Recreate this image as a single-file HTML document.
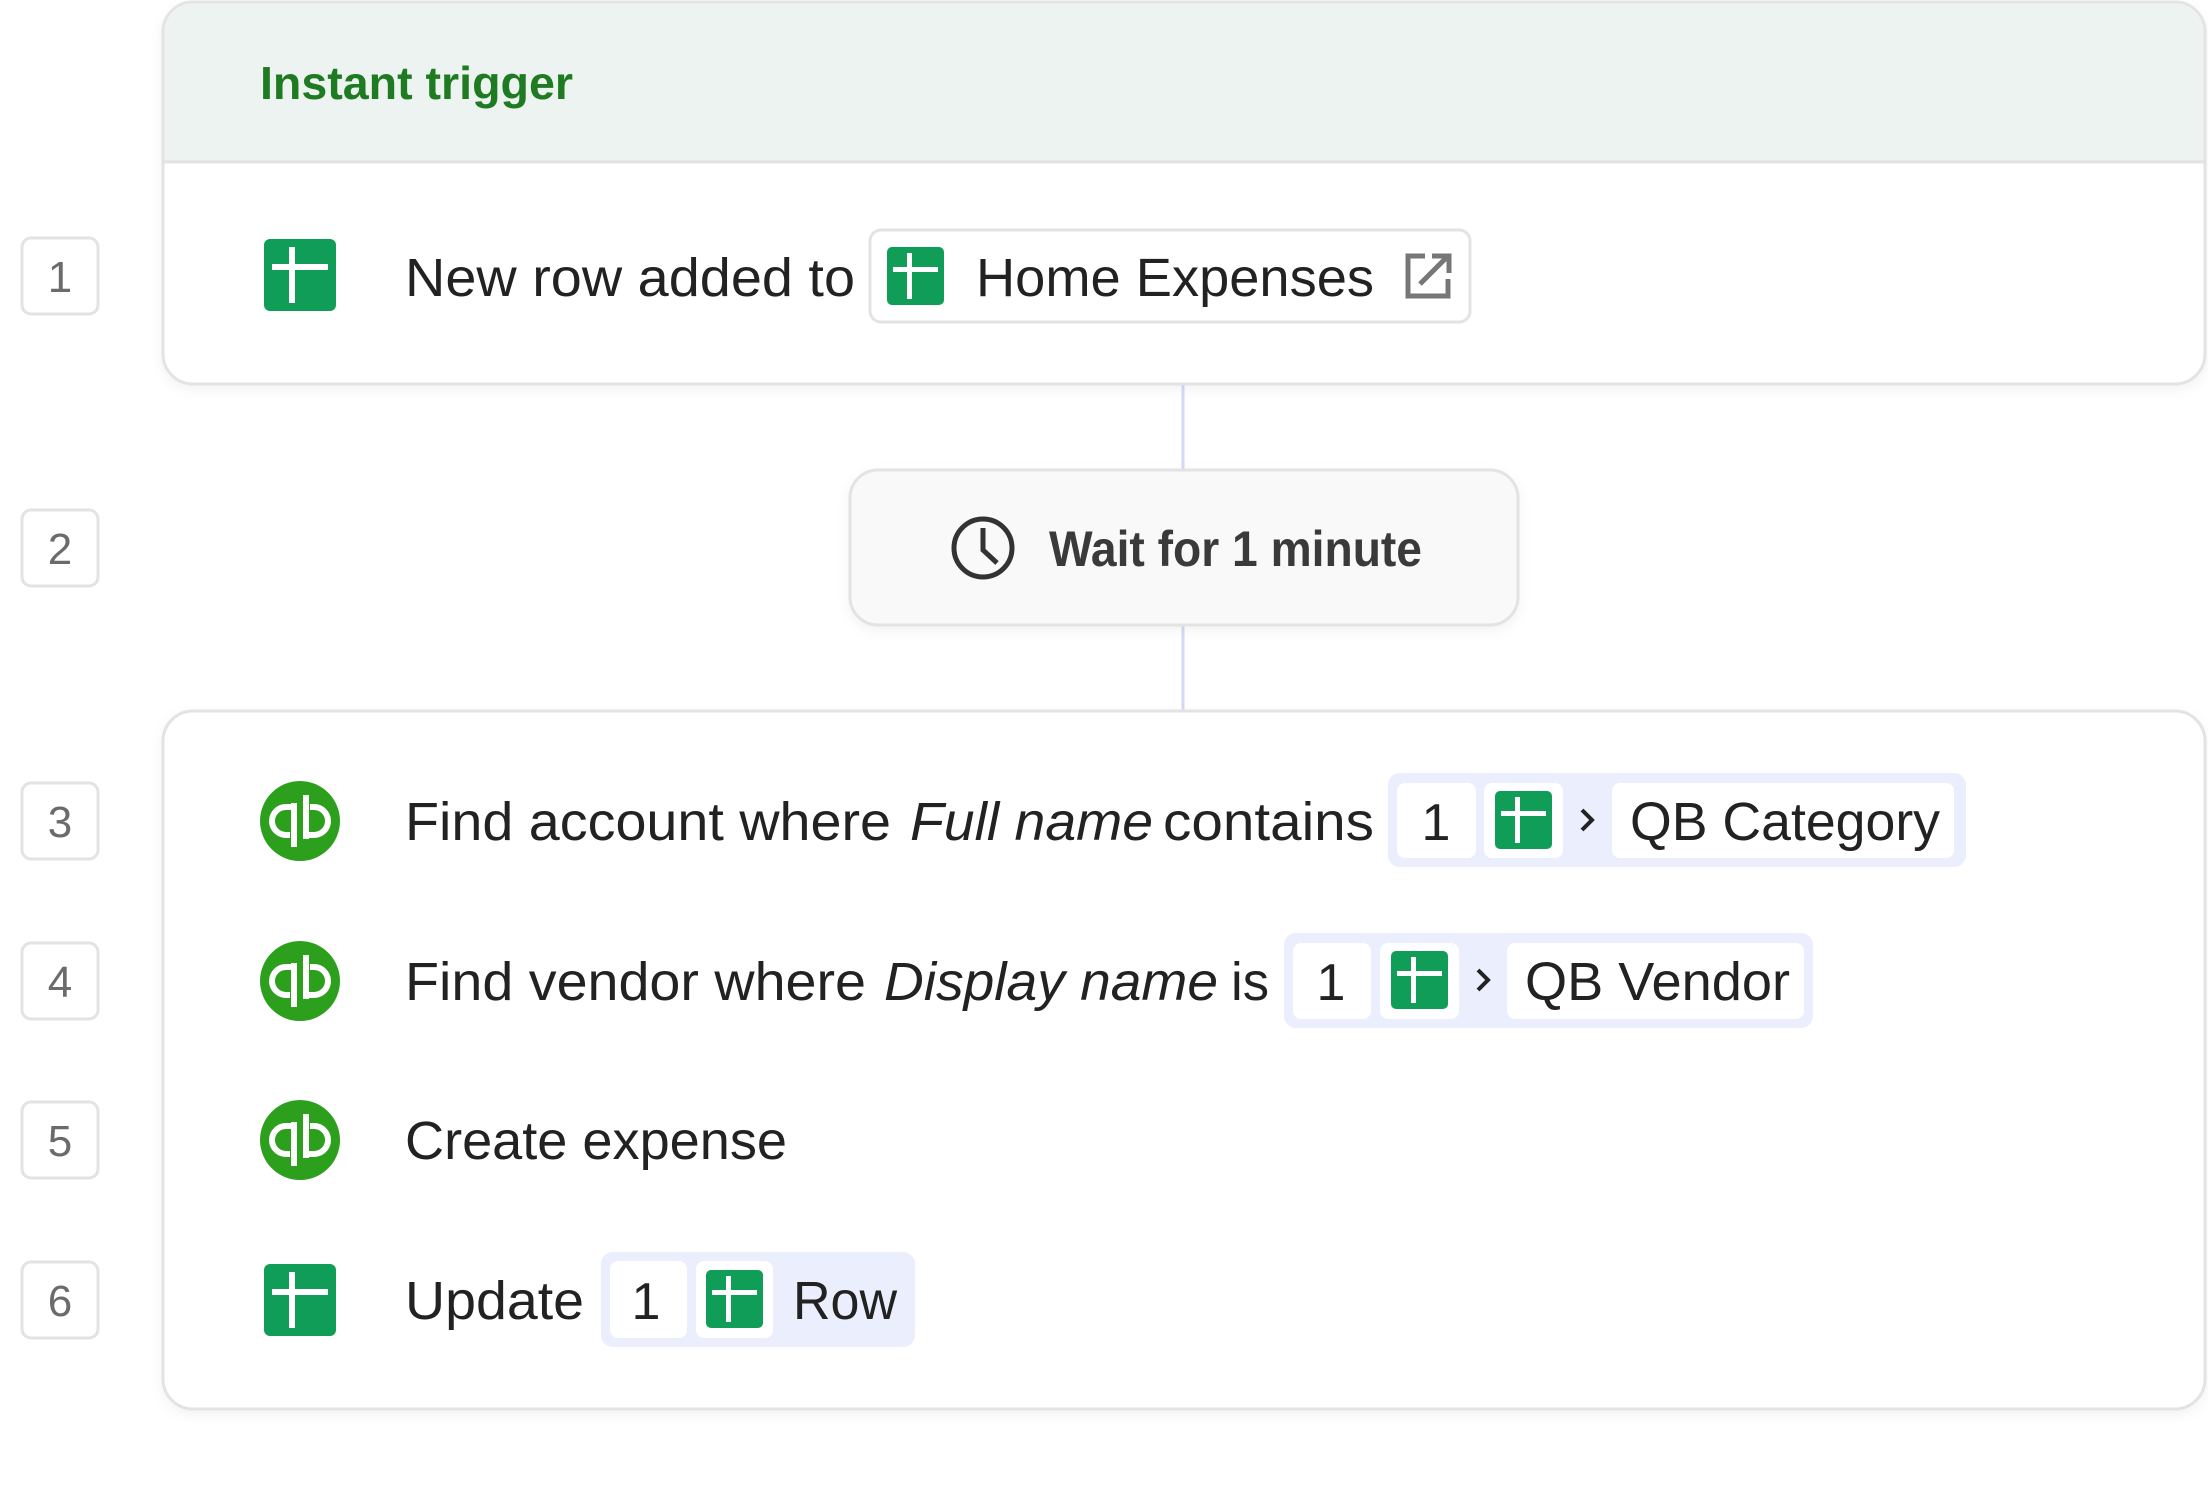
<!DOCTYPE html>
<html><head><meta charset="utf-8"><style>
html,body{margin:0;padding:0;background:#fff;}
svg{display:block;}
text{font-family:"Liberation Sans",sans-serif;}
</style></head><body>
<svg width="2208" height="1508" viewBox="0 0 2208 1508" xmlns="http://www.w3.org/2000/svg">
<defs>
<filter id="sh" x="-5%" y="-5%" width="110%" height="115%"><feDropShadow dx="0" dy="4" stdDeviation="6" flood-color="#000" flood-opacity="0.05"/></filter>
<g id="sheet">
<rect x="0" y="0" width="72" height="72" rx="6" fill="#0f9d58"/>
<rect x="8" y="25" width="56" height="6" fill="#fff"/>
<rect x="25" y="8" width="6" height="56" fill="#fff"/>
</g>
<g id="sheetS">
<rect x="0" y="0" width="57" height="58" rx="5" fill="#0f9d58"/>
<rect x="6" y="20" width="45" height="5" fill="#fff"/>
<rect x="20" y="6" width="5" height="46" fill="#fff"/>
</g>
<g id="qb">
<circle cx="0" cy="0" r="40" fill="#2ca01c"/>
<path d="M-6 -14 H-14 A14 14 0 0 0 -14 14 H-10" fill="none" stroke="#fff" stroke-width="6"/>
<path d="M-6 -18 V26" stroke="#fff" stroke-width="6"/>
<path d="M6 14 H14 A14 14 0 0 0 14 -14 H10" fill="none" stroke="#fff" stroke-width="6"/>
<path d="M6 18 V-26" stroke="#fff" stroke-width="6"/>
</g>
</defs>

<!-- connectors -->
<line x1="1183" y1="384" x2="1183" y2="470" stroke="#d3daf7" stroke-width="3"/>
<line x1="1183" y1="625" x2="1183" y2="711" stroke="#d3daf7" stroke-width="3"/>

<!-- card 1 -->
<g filter="url(#sh)">
<rect x="163" y="2" width="2042" height="382" rx="30" fill="#fff" stroke="#e3e3e3" stroke-width="3"/>
</g>
<path d="M164.5 162 V32 A29 29 0 0 1 193 3.5 H2175 A29 29 0 0 1 2203.5 32 V162 Z" fill="#edf3f0"/>
<line x1="163" y1="162" x2="2205" y2="162" stroke="#e3e3e3" stroke-width="3"/>
<text x="260" y="99" font-size="46" font-weight="bold" fill="#1e7b22" textLength="313" lengthAdjust="spacingAndGlyphs">Instant trigger</text>

<use href="#sheet" x="264" y="239"/>
<text x="405" y="296" font-size="54" fill="#222" textLength="450" lengthAdjust="spacingAndGlyphs">New row added to</text>
<rect x="870" y="230" width="600" height="92" rx="11" fill="#fff" stroke="#e3e3e3" stroke-width="3"/>
<use href="#sheetS" x="887" y="247"/>
<text x="976" y="296" font-size="54" fill="#222" textLength="398" lengthAdjust="spacingAndGlyphs">Home Expenses</text>
<path d="M1425 256 H1408 V296 H1448 V279" fill="none" stroke="#777" stroke-width="5"/>
<path d="M1420 284 L1446 258 M1432 256 H1449 V273" fill="none" stroke="#777" stroke-width="5"/>

<!-- wait box -->
<g filter="url(#sh)">
<rect x="850" y="470" width="668" height="155" rx="28" fill="#f9f9f9" stroke="#e3e3e3" stroke-width="3"/>
</g>
<circle cx="983" cy="548" r="29" fill="none" stroke="#333" stroke-width="5"/>
<path d="M983 528 V550 L997 563" fill="none" stroke="#333" stroke-width="5"/>
<text x="1049" y="566" font-size="50" font-weight="bold" fill="#3a3a3a" textLength="373" lengthAdjust="spacingAndGlyphs">Wait for 1 minute</text>

<!-- card 2 -->
<g filter="url(#sh)">
<rect x="163" y="711" width="2042" height="698" rx="30" fill="#fff" stroke="#e3e3e3" stroke-width="3"/>
</g>

<!-- row 3 -->
<use href="#qb" x="300" y="821"/>
<text x="405" y="840" font-size="54" fill="#222" textLength="486" lengthAdjust="spacingAndGlyphs">Find account where</text>
<text x="910" y="840" font-size="54" font-style="italic" fill="#222" textLength="243" lengthAdjust="spacingAndGlyphs">Full name</text>
<text x="1163" y="840" font-size="54" fill="#222" textLength="211" lengthAdjust="spacingAndGlyphs">contains</text>
<rect x="1388" y="773" width="578" height="94" rx="12" fill="#eaeefd"/>
<rect x="1397" y="783" width="79" height="75" rx="8" fill="#fff"/>
<text x="1436" y="840" font-size="52" fill="#222" text-anchor="middle">1</text>
<rect x="1484" y="783" width="79" height="75" rx="8" fill="#fff"/>
<use href="#sheetS" x="1495" y="791"/>
<path d="M1582 810 L1592 820 L1582 830" fill="none" stroke="#222" stroke-width="4"/>
<rect x="1612" y="783" width="342" height="75" rx="8" fill="#fff"/>
<text x="1630" y="840" font-size="54" fill="#222" textLength="310" lengthAdjust="spacingAndGlyphs">QB Category</text>

<!-- row 4 -->
<use href="#qb" x="300" y="981"/>
<text x="405" y="1000" font-size="54" fill="#222" textLength="461" lengthAdjust="spacingAndGlyphs">Find vendor where</text>
<text x="884" y="1000" font-size="54" font-style="italic" fill="#222" textLength="334" lengthAdjust="spacingAndGlyphs">Display name</text>
<text x="1231" y="1000" font-size="54" fill="#222" textLength="38" lengthAdjust="spacingAndGlyphs">is</text>
<rect x="1284" y="933" width="529" height="95" rx="12" fill="#eaeefd"/>
<rect x="1293" y="943" width="78" height="76" rx="8" fill="#fff"/>
<text x="1331" y="1000" font-size="52" fill="#222" text-anchor="middle">1</text>
<rect x="1380" y="943" width="79" height="76" rx="8" fill="#fff"/>
<use href="#sheetS" x="1391" y="951"/>
<path d="M1478 970 L1488 980 L1478 990" fill="none" stroke="#222" stroke-width="4"/>
<rect x="1507" y="943" width="297" height="76" rx="8" fill="#fff"/>
<text x="1525" y="1000" font-size="54" fill="#222" textLength="265" lengthAdjust="spacingAndGlyphs">QB Vendor</text>

<!-- row 5 -->
<use href="#qb" x="300" y="1140"/>
<text x="405" y="1159" font-size="54" fill="#222" textLength="382" lengthAdjust="spacingAndGlyphs">Create expense</text>

<!-- row 6 -->
<use href="#sheet" x="264" y="1264"/>
<text x="405" y="1319" font-size="54" fill="#222" textLength="179" lengthAdjust="spacingAndGlyphs">Update</text>
<rect x="601" y="1252" width="314" height="95" rx="12" fill="#eaeefd"/>
<rect x="610" y="1261" width="77" height="77" rx="8" fill="#fff"/>
<text x="646" y="1319" font-size="52" fill="#222" text-anchor="middle">1</text>
<rect x="696" y="1261" width="77" height="77" rx="8" fill="#fff"/>
<use href="#sheetS" x="706" y="1270"/>
<text x="793" y="1319" font-size="54" fill="#222" textLength="104" lengthAdjust="spacingAndGlyphs">Row</text>

<!-- number boxes -->
<g fill="#fff" stroke="#e3e3e3" stroke-width="3">
<rect x="22" y="238" width="76" height="76" rx="9"/>
<rect x="22" y="510" width="76" height="76" rx="9"/>
<rect x="22" y="783" width="76" height="76" rx="9"/>
<rect x="22" y="943" width="76" height="76" rx="9"/>
<rect x="22" y="1102" width="76" height="76" rx="9"/>
<rect x="22" y="1262" width="76" height="76" rx="9"/>
</g>
<g font-size="44" fill="#6b6b6b" text-anchor="middle">
<text x="60" y="292">1</text>
<text x="60" y="564">2</text>
<text x="60" y="837">3</text>
<text x="60" y="997">4</text>
<text x="60" y="1156">5</text>
<text x="60" y="1316">6</text>
</g>
</svg>
</body></html>
